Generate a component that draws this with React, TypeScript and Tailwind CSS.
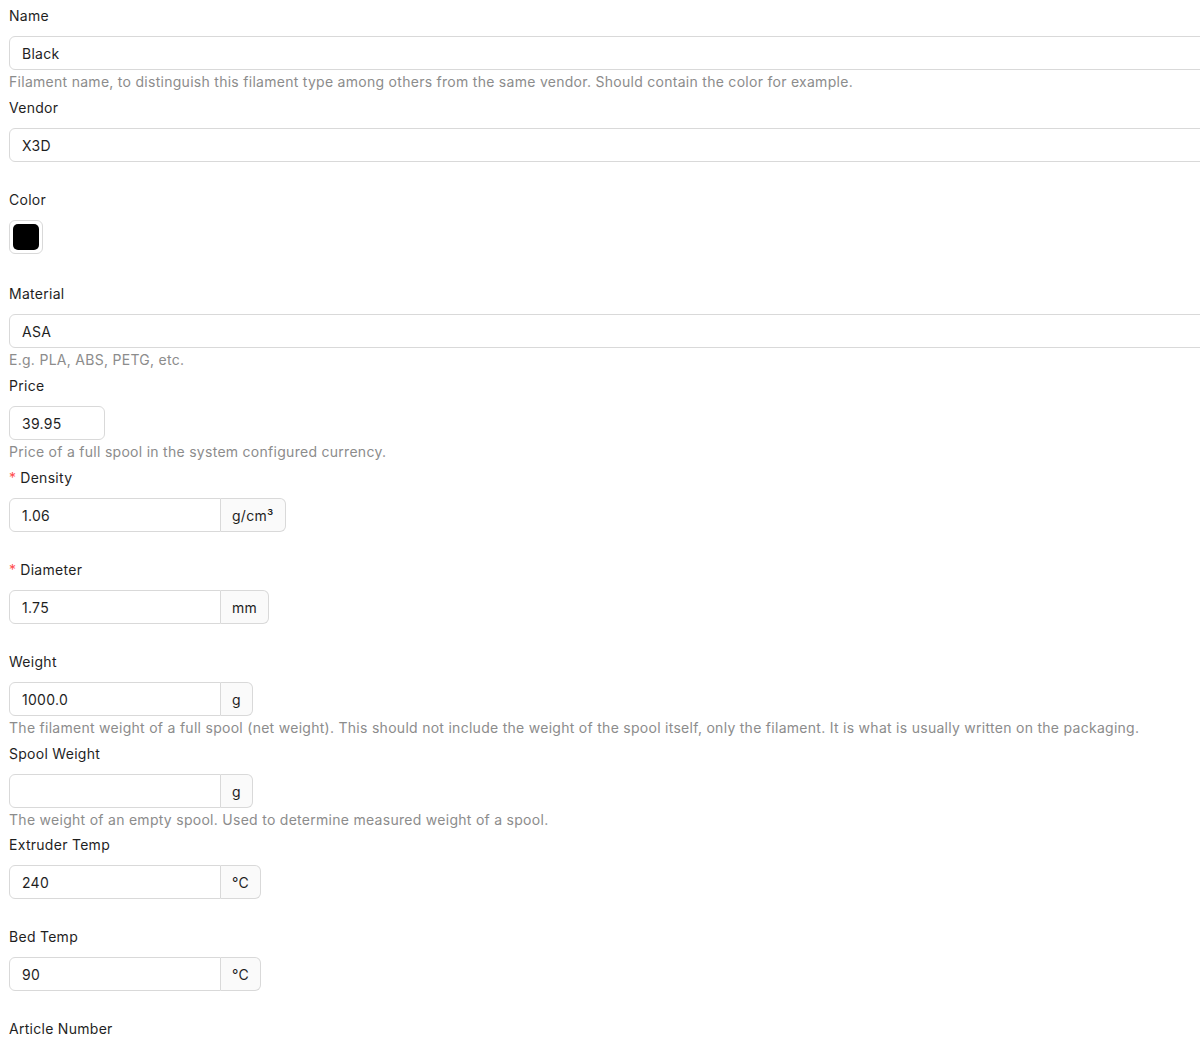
const font = { fontFamily: "Inter, 'Liberation Sans', sans-serif", letterSpacing: "0.28px" };

function Label({ text, required }: { text: string; required?: boolean }) {
  return (
    <div className="h-[22px] leading-[22px] text-[14px] text-[#1f1f1f] mb-[9px] flex items-center">
      {required && <span className="text-[#ff4d4f] mr-[4px] text-[14px]">*</span>}
      {text}
    </div>
  );
}

function Help({ text }: { text?: string }) {
  return (
    <div className="h-[24px] leading-[24px] text-[14px] text-[#8c8c8c] mb-[3px] whitespace-nowrap">
      {text}
    </div>
  );
}

function TextField({ label, value, help }: { label: string; value: string; help?: string }) {
  return (
    <div>
      <Label text={label} />
      <div className="h-[34px] w-[1220px] border border-[#d9d9d9] rounded-[6px] px-[12px] flex items-center text-[14px] text-[#1f1f1f] bg-white">
        {value}
      </div>
      <Help text={help} />
    </div>
  );
}

function AddonField({
  label,
  value,
  unit,
  help,
  required,
}: {
  label: string;
  value: string;
  unit: string;
  help?: string;
  required?: boolean;
}) {
  return (
    <div>
      <Label text={label} required={required} />
      <div className="flex h-[34px] text-[14px] text-[#1f1f1f]">
        <div className="w-[212px] border border-[#d9d9d9] rounded-l-[6px] px-[12px] flex items-center bg-white">
          {value}
        </div>
        <div className="border border-l-0 border-[#d9d9d9] rounded-r-[6px] bg-[#fafafa] px-[11px] flex items-center">
          {unit}
        </div>
      </div>
      <Help text={help} />
    </div>
  );
}

export default function App() {
  return (
    <div className="w-full overflow-hidden bg-white" style={font}>
      <div className="pl-[9px] pt-[5px]">
        <TextField
          label="Name"
          value="Black"
          help="Filament name, to distinguish this filament type among others from the same vendor. Should contain the color for example."
        />
        <TextField label="Vendor" value="X3D" />

        <div>
          <Label text="Color" />
          <div className="h-[36px]">
            <div className="w-[34px] h-[34px] border border-[#d9d9d9] rounded-[6px] p-[3px] bg-white">
              <div className="w-full h-full bg-black rounded-[5px]" />
            </div>
          </div>
          <Help />
        </div>

        <TextField label="Material" value="ASA" help="E.g. PLA, ABS, PETG, etc." />

        <div>
          <Label text="Price" />
          <div className="h-[34px] w-[96px] border border-[#d9d9d9] rounded-[6px] px-[12px] flex items-center text-[14px] text-[#1f1f1f]">
            39.95
          </div>
          <Help text="Price of a full spool in the system configured currency." />
        </div>

        <AddonField label="Density" value="1.06" unit="g/cm³" required />
        <AddonField label="Diameter" value="1.75" unit="mm" required />
        <AddonField
          label="Weight"
          value="1000.0"
          unit="g"
          help="The filament weight of a full spool (net weight). This should not include the weight of the spool itself, only the filament. It is what is usually written on the packaging."
        />
        <AddonField
          label="Spool Weight"
          value=""
          unit="g"
          help="The weight of an empty spool. Used to determine measured weight of a spool."
        />
        <div className="-mt-px">
          <AddonField label="Extruder Temp" value="240" unit="°C" />
        </div>
        <AddonField label="Bed Temp" value="90" unit="°C" />
        <TextField label="Article Number" value="" />
      </div>
    </div>
  );
}
